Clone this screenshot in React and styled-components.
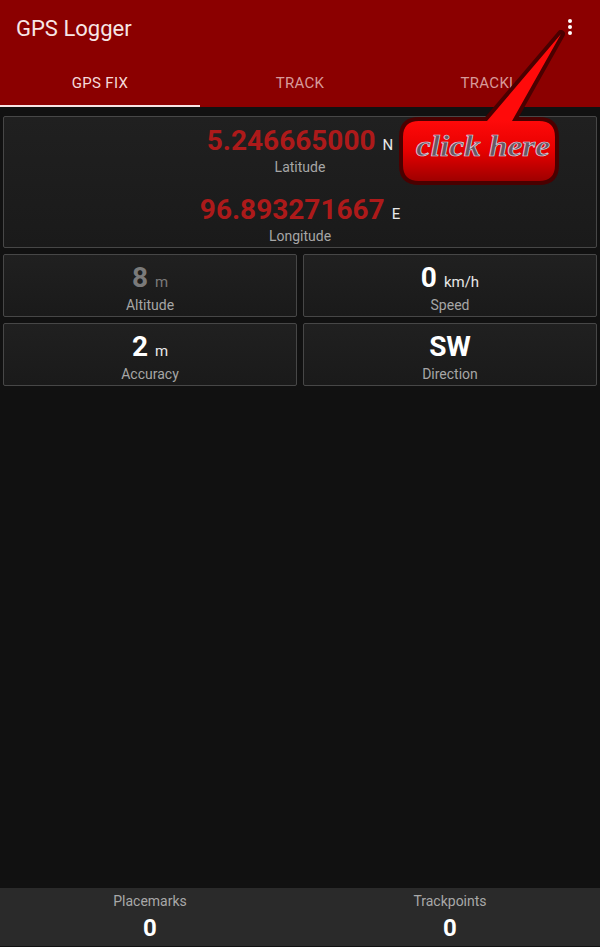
import React from "react";
import styled, { createGlobalStyle } from "styled-components";

const GlobalStyle = createGlobalStyle`
  html, body {
    margin: 0;
    padding: 0;
    background: #111111;
    font-family: Roboto, "Liberation Sans", sans-serif;
  }
`;

const tabs = ["GPS FIX", "TRACK", "TRACKL"];

const calloutShape =
  "M23 91 H91 L165 4 L116 91 H143 Q159 91 159 107 V135 Q159 151 143 151 H23 Q7 151 7 135 V107 Q7 91 23 91 Z";

function Reading({ value, unit, label, dim, wide, tall }) {
  return (
    <ReadingBox $tall={tall}>
      <ValueRow $wide={wide}>
        <Value $dim={dim} $wide={wide}>{value}</Value>
        {unit && <Unit $dim={dim}>{unit}</Unit>}
      </ValueRow>
      <Label>{label}</Label>
    </ReadingBox>
  );
}

function ClickHereCallout() {
  return (
    <Callout viewBox="0 0 180 170" width="180" height="170">
      <defs>
        <linearGradient id="calloutFill" gradientUnits="userSpaceOnUse" x1="0" y1="90" x2="0" y2="152">
          <stop offset="0" stopColor="#ff0a0a" />
          <stop offset="0.5" stopColor="#e60000" />
          <stop offset="1" stopColor="#9c0000" />
        </linearGradient>
      </defs>
      <path d={calloutShape} fill="#4a0000" stroke="#4a0000" strokeWidth="8" strokeLinejoin="round" />
      <path d={calloutShape} fill="url(#calloutFill)" />
      <CalloutText x="20" y="126" textLength="134" lengthAdjust="spacingAndGlyphs">
        click here
      </CalloutText>
    </Callout>
  );
}

export default function App() {
  return (
    <Screen>
      <GlobalStyle />
      <AppBar>
        <TitleRow>
          <Title>GPS Logger</Title>
          <MenuDots>
            <i />
            <i />
            <i />
          </MenuDots>
        </TitleRow>
        <TabRow>
          {tabs.map((tab, i) => (
            <Tab key={tab} $active={i === 0}>{tab}</Tab>
          ))}
        </TabRow>
      </AppBar>

      <Content>
        <Panel>
          <Reading wide tall value="5.246665000" unit="N" label="Latitude" />
          <Reading wide value="96.893271667" unit="E" label="Longitude" />
        </Panel>
        <CardGrid>
          <Panel>
            <Reading dim value="8" unit="m" label="Altitude" />
          </Panel>
          <Panel>
            <Reading value="0" unit="km/h" label="Speed" />
          </Panel>
          <Panel>
            <Reading value="2" unit="m" label="Accuracy" />
          </Panel>
          <Panel>
            <Reading value="SW" label="Direction" />
          </Panel>
        </CardGrid>
      </Content>

      <Footer>
        <Counter>
          <CounterLabel>Placemarks</CounterLabel>
          <CounterValue>0</CounterValue>
        </Counter>
        <Counter>
          <CounterLabel>Trackpoints</CounterLabel>
          <CounterValue>0</CounterValue>
        </Counter>
      </Footer>

      <ClickHereCallout />
    </Screen>
  );
}

const Screen = styled.div`
  position: relative;
  width: 600px;
  height: 947px;
  overflow: hidden;
  display: flex;
  flex-direction: column;
  background: #111111;
`;

const AppBar = styled.header`
  height: 107px;
  flex: none;
  display: flex;
  flex-direction: column;
  background: #8b0000;
`;

const TitleRow = styled.div`
  height: 56px;
  flex: none;
  display: flex;
  align-items: center;
  justify-content: space-between;
  padding: 0 28px 0 16px;
`;

const Title = styled.h1`
  margin: 0;
  font-size: 22px;
  font-weight: 400;
  color: #f7e6e6;
`;

const MenuDots = styled.div`
  display: flex;
  flex-direction: column;
  gap: 2px;
  margin-bottom: 2px;

  i {
    width: 4px;
    height: 4px;
    border-radius: 50%;
    background: #ffffff;
  }
`;

const TabRow = styled.nav`
  flex: 1;
  display: grid;
  grid-template-columns: repeat(3, 1fr);
`;

const Tab = styled.div`
  display: flex;
  align-items: center;
  justify-content: center;
  padding-top: 4px;
  overflow: hidden;
  font-size: 15px;
  letter-spacing: 0.3px;
  color: ${(p) => (p.$active ? "#f5dada" : "#d79a9a")};
  box-sizing: border-box;
  border-bottom: 2px solid ${(p) => (p.$active ? "#f7e3e3" : "transparent")};

  &:last-child {
    padding-right: 22px;
  }
`;

const Content = styled.main`
  flex: 1;
  display: flex;
  flex-direction: column;
  gap: 6px;
  padding: 9px 3px 0;
`;

const Panel = styled.section`
  box-sizing: border-box;
  display: flex;
  flex-direction: column;
  border: 1px solid #474747;
  border-radius: 2px;
  background: linear-gradient(180deg, #202020 0%, #1a1a1a 100%);
`;

const CardGrid = styled.div`
  display: grid;
  grid-template-columns: 1fr 1fr;
  grid-auto-rows: 63px;
  gap: 6px;
`;

const ReadingBox = styled.div`
  display: flex;
  flex-direction: column;
  align-items: center;
  height: ${(p) => (p.$tall ? "69px" : "61px")};
`;

const ValueRow = styled.div`
  display: flex;
  align-items: baseline;
  gap: 7px;
  box-sizing: border-box;
  height: 41px;
  padding-top: ${(p) => (p.$wide ? "4px" : "3px")};
  line-height: 39px;
`;

const Value = styled.span`
  font-size: 28px;
  font-weight: 700;
  color: ${(p) => (p.$wide ? "#ad1a1a" : p.$dim ? "#7a7a7a" : "#ffffff")};
`;

const Unit = styled.span`
  font-size: 15px;
  color: ${(p) => (p.$dim ? "#7a7a7a" : "#e8e8e8")};
`;

const Label = styled.span`
  font-size: 14px;
  line-height: 18px;
  color: #a6a6a6;
`;

const Footer = styled.footer`
  height: 58px;
  flex: none;
  margin-bottom: 1px;
  display: grid;
  grid-template-columns: 1fr 1fr;
  background: #2a2a2a;
`;

const Counter = styled.div`
  display: flex;
  flex-direction: column;
  align-items: center;
  padding-top: 5px;
`;

const CounterLabel = styled.span`
  font-size: 14px;
  line-height: 17px;
  color: #a8a8a8;
`;

const CounterValue = styled.span`
  font-size: 24px;
  line-height: 36px;
  font-weight: 700;
  color: #ffffff;
`;

const Callout = styled.svg`
  position: absolute;
  left: 396px;
  top: 30px;
`;

const CalloutText = styled.text`
  font-family: "Liberation Serif", serif;
  font-size: 29px;
  font-style: italic;
  font-weight: 700;
  fill: #685862;
  stroke: #dcd6e2;
  stroke-width: 0.7px;
`;
